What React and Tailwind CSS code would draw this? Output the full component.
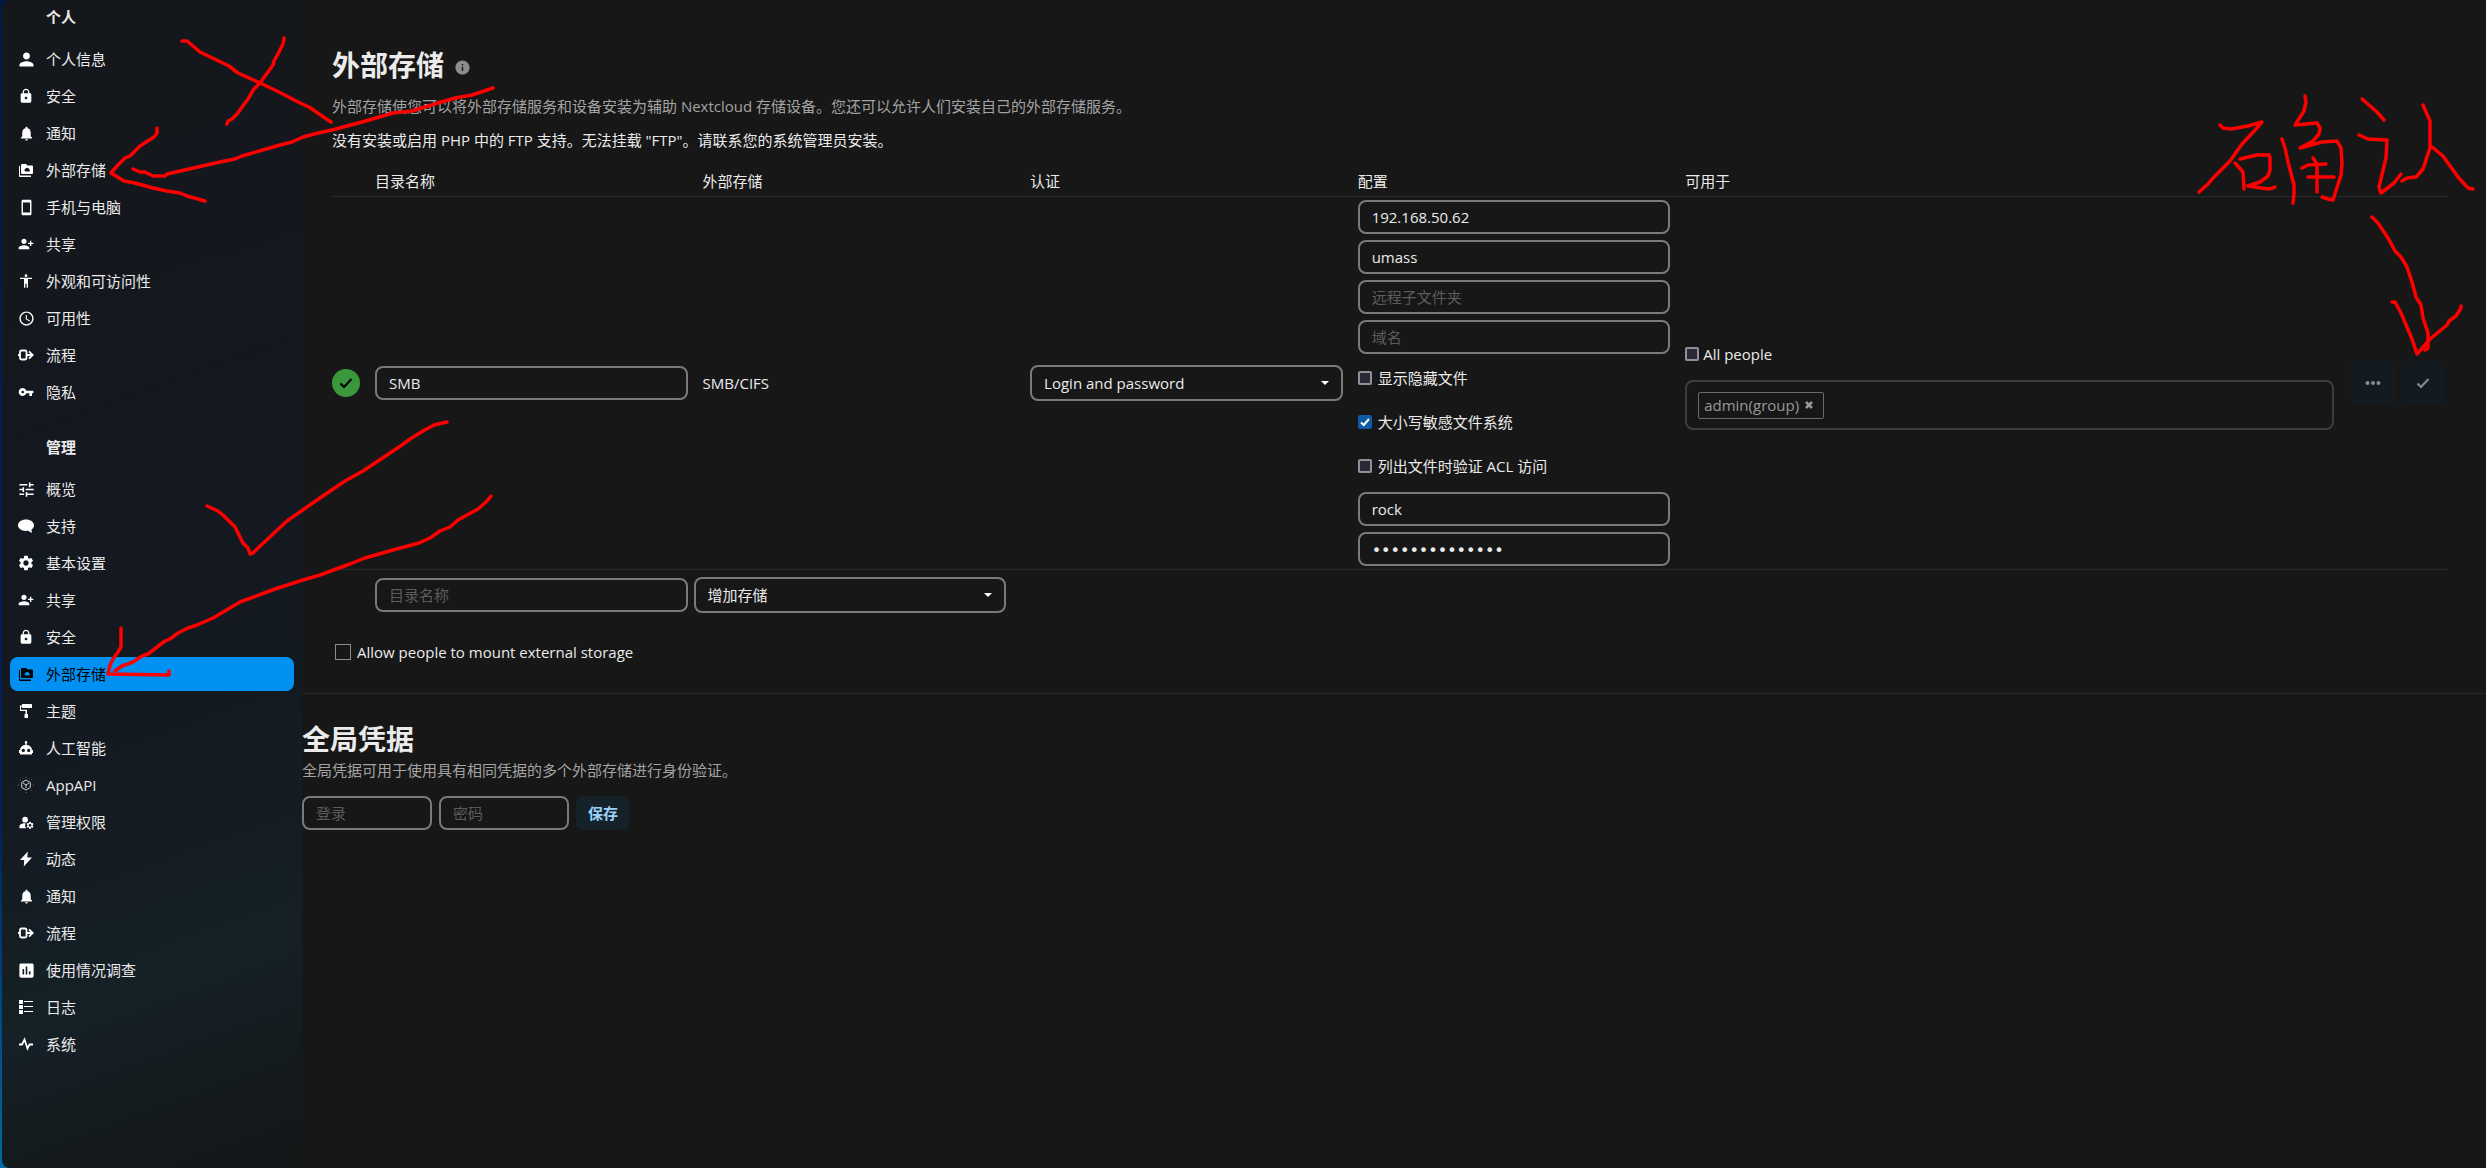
import { useState } from 'react'
import clsx from 'clsx'
import {
  MdAccessTime,
  MdAccessibility,
  MdAssessment,
  MdInfo,
  MdLock,
  MdManageAccounts,
  MdNotifications,
  MdPerson,
  MdPersonAddAlt1,
  MdSettings,
  MdSmartphone,
  MdTune,
  MdVpnKey,
} from 'react-icons/md'

function ExternalIcon() {
  return (
    <svg viewBox="0 0 16 16" className="size-4" fill="currentColor">
      <path d="M1 4h1v9.5h11V15H2a1 1 0 0 1-1-1z" />
      <path fillRule="evenodd" d="M4 2h4l1.5 1.5H14a1 1 0 0 1 1 1V11a1 1 0 0 1-1 1H4a1 1 0 0 1-1-1V3a1 1 0 0 1 1-1zm3.500 7.500h3.500a1.200 1.200 0 0 0 .1-2.300 1.900 1.900 0 0 0-3.600-.4 1.400 1.400 0 0 0 0 2.700z" />
    </svg>
  )
}

function FlowIcon() {
  return (
    <svg viewBox="0 0 16 16" className="size-4" fill="none" stroke="currentColor" strokeWidth="1.8">
      <path d="M0 8h2M8.500 8h6.500M11 4.300 14.700 8 11 11.700" />
      <rect x="2" y="3.500" width="6.500" height="9" rx="1.500" />
    </svg>
  )
}

function ChatIcon() {
  return (
    <svg viewBox="0 0 16 16" className="size-4" fill="currentColor">
      <path d="M8 1.500c4.400 0 8 2.400 8 5.700 0 1.900-1 3.400-2.600 4.500L14 15l-4-2.200c-.6.100-1.300.1-2 .1-4.400 0-8-2.400-8-5.700s3.600-5.700 8-5.700z" />
    </svg>
  )
}

function RollerIcon() {
  return (
    <svg viewBox="0 0 16 16" className="size-4" fill="currentColor">
      <path d="M4.500 1h9a.5.500 0 0 1 .5.500v3a.5.500 0 0 1-.5.500h-9a.5.500 0 0 1-.5-.5V3.700H3v3h6V11h.5a.5.500 0 0 1 .5.500V14.500a.5.500 0 0 1-.5.500h-2.500a.5.500 0 0 1-.5-.5v-3a.5.500 0 0 1 .5-.5h.5V8H2V2.500h2v-1a.5.500 0 0 1 .5-.5z" />
    </svg>
  )
}

function RobotIcon() {
  return (
    <svg viewBox="0 0 16 16" className="size-4" fill="currentColor">
      <path fillRule="evenodd" d="M8 1a1.300 1.300 0 0 1 .7 2.400V5A5.300 5.300 0 0 1 14 10h1v3h-1v1.500H2V13H1v-3h1a5.300 5.300 0 0 1 5.300-5V3.400A1.300 1.300 0 0 1 8 1zM5.300 8.700a1.700 1.700 0 1 0 0 3.400 1.700 1.700 0 0 0 0-3.400zm5.400 0a1.700 1.700 0 1 0 0 3.400 1.700 1.700 0 0 0 0-3.400z" />
    </svg>
  )
}

function CubeIcon() {
  return (
    <svg viewBox="0 0 16 16" className="size-4 opacity-80" fill="none" stroke="currentColor">
      <path d="M8 3 12.300 5.500v5L8 13l-4.300-2.500v-5zM5 6l3 2 3-2M8 8v3" />
      <path d="M8 0v1M8 15v1M0 8h1M15 8h1M2 2.500l.7.500M13.300 13l.7.500M14 2.500l-.7.500M2.700 13l-.7.500" strokeOpacity=".5" />
    </svg>
  )
}

function BoltIcon() {
  return (
    <svg viewBox="0 0 16 16" className="size-4" fill="currentColor">
      <path d="M9.800.5 2 9h4.200L5.800 15.500 14 6.500H9.300z" />
    </svg>
  )
}

function LogIcon() {
  return (
    <svg viewBox="0 0 16 16" className="size-4" fill="currentColor">
      <path d="M1 1h4v4H1zM1 6h4v4H1zM1 11h4v4H1zM6 2h9v1H6zM6 7h9v1H6zM6 12h9v1H6z" />
    </svg>
  )
}

function PulseIcon() {
  return (
    <svg viewBox="0 0 16 16" className="size-4" fill="none" stroke="currentColor" strokeWidth="1.800">
      <path d="M1 8.500h3L6.500 3.500l3 9 2-4H15" />
    </svg>
  )
}

const PERSONAL = [
  { label: '个人信息', icon: <MdPerson className="size-[21px]" /> },
  { label: '安全', icon: <MdLock className="size-4" /> },
  { label: '通知', icon: <MdNotifications className="size-[17px]" /> },
  { label: '外部存储', icon: <ExternalIcon /> },
  { label: '手机与电脑', icon: <MdSmartphone className="size-[17px]" /> },
  { label: '共享', icon: <MdPersonAddAlt1 className="size-4" /> },
  { label: '外观和可访问性', icon: <MdAccessibility className="size-4" /> },
  { label: '可用性', icon: <MdAccessTime className="size-[17px]" /> },
  { label: '流程', icon: <FlowIcon /> },
  { label: '隐私', icon: <MdVpnKey className="size-4" /> },
]

const ADMIN = [
  { label: '概览', icon: <MdTune className="size-[19px]" /> },
  { label: '支持', icon: <ChatIcon /> },
  { label: '基本设置', icon: <MdSettings className="size-[18px]" /> },
  { label: '共享', icon: <MdPersonAddAlt1 className="size-4" /> },
  { label: '安全', icon: <MdLock className="size-4" /> },
  { label: '外部存储', icon: <ExternalIcon />, active: true },
  { label: '主题', icon: <RollerIcon /> },
  { label: '人工智能', icon: <RobotIcon /> },
  { label: 'AppAPI', icon: <CubeIcon /> },
  { label: '管理权限', icon: <MdManageAccounts className="size-[17px]" /> },
  { label: '动态', icon: <BoltIcon /> },
  { label: '通知', icon: <MdNotifications className="size-[17px]" /> },
  { label: '流程', icon: <FlowIcon /> },
  { label: '使用情况调查', icon: <MdAssessment className="size-[19px]" /> },
  { label: '日志', icon: <LogIcon /> },
  { label: '系统', icon: <PulseIcon /> },
]

const INPUT =
  'h-[34px] w-full rounded-lg border-2 border-[#7a7a7a] bg-[#171717] px-3 text-[15px] text-[#ebebeb] placeholder:text-[#5c5c5c] outline-none'

// Pen strokes drawn over the page, one entry per stroke
const STROKES = [
  '182,41 187,41 200,52 229,66 238,73 260,83 277,91 300,103 309,107 325,118 331,122',
  '284,38 283,44 279,52 274,61 273,65 260,83 254,89 248,99 237,114 232,119 228,121 227,124',
  '493,88 472,95 455,98 438,103 412,111 393,113 362,122 332,130 318,133 303,137 292,142 280,145 242,156 235,159 220,162 167,174 165,176 153,176 145,172 140,172 133,169',
  '157,128 157,133 154,137 140,146 130,156 125,158 117,166 111,173 124,181 135,183 153,188 167,191 180,193 187,196 205,201',
  '207,506 218,511 224,516 235,527 243,543 248,548 250,554 253,553 257,549 273,534 287,521 317,500 345,481 363,471 387,455 402,445 410,439 423,431 434,425 447,422',
  '491,496 487,501 478,509 458,520 450,527 440,531 430,538 419,543 393,550 365,558 350,564 320,575 303,580 275,589 240,602 213,618 197,625 188,628 178,633 170,639 165,641 161,644 148,654 142,656 133,662 122,666 115,671',
  '121,628 121,647 118,652 113,659 110,665 108,674 169,675 169,671',
  '2220,125 2223,128 2231,129 2248,126 2262,122 2256,129 2242,144 2230,161 2213,178 2208,184 2199,192',
  '2240,159 2257,155 2269,155 2270,158 2270,170 2268,176 2260,182 2248,186 2268,189 2273,188 2275,187',
  '2235,163 2243,172 2244,189',
  '2282,139 2285,148 2288,162 2294,185 2294,193 2293,203',
  '2305,96 2306,102 2304,111 2295,125 2317,123 2320,128 2319,134 2313,141 2300,148 2322,142 2337,141 2341,148 2342,163 2341,175 2333,200 2328,199 2322,197',
  '2302,168 2308,165 2326,164',
  '2308,177 2334,177',
  '2313,158 2317,164 2317,192',
  '2362,99 2377,112 2384,120',
  '2359,135 2368,139 2387,140 2386,158 2379,187 2381,193 2394,183 2401,174',
  '2423,105 2430,121 2430,148 2423,169 2416,177 2407,178 2402,181',
  '2432,147 2443,156 2458,177 2468,188 2473,189',
  '2372,217 2378,223 2388,238 2395,251 2401,257 2407,267 2412,282 2416,297 2421,305 2423,318 2428,333 2428,348 2425,350',
  '2392,302 2395,302 2401,313 2412,339 2417,354 2430,339 2447,325 2449,321 2456,316 2461,308 2461,306',
]

function NavGroup({ title, items }) {
  return (
    <div className="mb-[21px]">
      <h3 className="mb-2 flex h-[34px] items-center pl-9 text-[15px] font-bold">{title}</h3>
      <ul className="space-y-[3px]">
        {items.map((item) => (
          <li key={item.label}>
            <a
              href="#"
              className={clsx('flex h-[34px] items-center rounded-lg', item.active && 'bg-[#0091f2] text-black')}
            >
              <span className={clsx('flex w-8 justify-center', !item.active && 'text-white')}>{item.icon}</span>
              <span className="pl-1">{item.label}</span>
            </a>
          </li>
        ))}
      </ul>
    </div>
  )
}

function Checkbox({ label, defaultChecked = false, className }) {
  const [checked, setChecked] = useState(defaultChecked)
  return (
    <label className={clsx('flex h-11 items-center', className)}>
      <span className="relative flex">
        <input
          type="checkbox"
          checked={checked}
          onChange={(e) => setChecked(e.target.checked)}
          className="size-3.5 appearance-none rounded-xs border-2 border-[#8f8f9d] bg-[#2b2a33] checked:border-[#0f5ba5] checked:bg-[#0f5ba5]"
        />
        {checked && (
          <svg viewBox="0 0 14 14" className="pointer-events-none absolute inset-0 size-3.5" fill="none" stroke="white" strokeWidth="2">
            <path d="M3 7.500 5.800 10 11 4" />
          </svg>
        )}
      </span>
      {label}
    </label>
  )
}

function Select({ label, value }) {
  return (
    <div className="relative w-full">
      <select
        aria-label={label}
        className="h-9 w-full appearance-none rounded-lg border-2 border-[#7a7a7a] bg-[#171717] px-3 text-[15px] text-[#ebebeb] outline-none"
      >
        <option>{value}</option>
      </select>
      <svg viewBox="0 0 8 4" className="pointer-events-none absolute top-4 right-3.5 h-1 w-2" fill="white">
        <path d="M0 0h8L4 4z" />
      </svg>
    </div>
  )
}

export default function App() {
  return (
    <div className="relative flex min-h-screen bg-[#171717] font-['Open_Sans','Noto_Sans_CJK_SC',sans-serif] text-[15px] leading-6 text-[#ebebeb]">
      {/* Sidebar */}
      <div className="flex shrink-0 bg-linear-to-b from-[#001a45] via-[#00205a] via-70% to-[#006ba3] pl-0.5">
        <nav className="w-[300px] overflow-hidden rounded-l-lg bg-[linear-gradient(160deg,#14181b_0%,#14171f_35%,#141a21_62%,#152027_82%,#141a1c_92%,#131617_100%)] px-2">
          <NavGroup title="个人" items={PERSONAL} />
          <NavGroup title="管理" items={ADMIN} />
        </nav>
      </div>

      <main className="min-w-0 flex-1">
        {/* External storage */}
        <section className="border-b border-[#292929] pt-[45px] pr-[38px] pb-[29px] pl-[30px]">
          <h2 className="flex h-10 items-center text-[28px] font-bold">
            外部存储
            <a href="#" aria-label="info" className="mt-1 ml-2.5 text-[#8c8c8c]">
              <MdInfo className="size-[17px]" />
            </a>
          </h2>
          <p className="mt-[9px] text-[#a3a3a3]">
            外部存储使您可以将外部存储服务和设备安装为辅助 Nextcloud 存储设备。您还可以允许人们安装自己的外部存储服务。
          </p>
          <p className="mt-2.5">没有安装或启用 PHP 中的 FTP 支持。无法挂载 "FTP"。请联系您的系统管理员安装。</p>

          <table className="mt-[15px] w-full table-fixed border-separate border-spacing-0 text-left">
            <colgroup>
              <col className="w-[34px]" />
              <col className="w-[15.48%]" />
              <col className="w-[15.48%]" />
              <col className="w-[15.48%]" />
              <col className="w-[15.48%]" />
              <col />
              <col className="w-[106px]" />
            </colgroup>
            <thead>
              <tr className="h-[30px] *:border-b *:border-[#292929] *:pb-0.5 *:pl-[9px] *:font-normal">
                <th></th>
                <th>目录名称</th>
                <th>外部存储</th>
                <th>认证</th>
                <th>配置</th>
                <th>可用于</th>
                <th></th>
              </tr>
            </thead>
            <tbody>
              <tr className="*:border-b *:border-[#292929]">
                <td>
                  <span className="flex size-7 items-center justify-center rounded-full bg-[#3b973b]">
                    <svg viewBox="0 0 16 16" className="size-4" fill="none" stroke="black" strokeWidth="2">
                      <path d="M2.500 8.500 6 12l7.500-8" />
                    </svg>
                  </span>
                </td>
                <td className="pr-1.5 pl-[9px]">
                  <input aria-label="目录名称" defaultValue="SMB" className={INPUT} />
                </td>
                <td className="pr-1.5 pl-[9px]">SMB/CIFS</td>
                <td className="pr-1.5 pl-[9px]">
                  <Select label="认证" value="Login and password" />
                </td>
                <td className="pr-1.5 pl-[9px]">
                  <div className="flex flex-col gap-1.5 pt-[3px] pb-0.5">
                    <input aria-label="主机" defaultValue="192.168.50.62" className={INPUT} />
                    <input aria-label="共享" defaultValue="umass" className={INPUT} />
                    <input placeholder="远程子文件夹" className={INPUT} />
                    <input placeholder="域名" className={INPUT} />
                  </div>
                  <Checkbox label="显示隐藏文件" className="gap-1.5" />
                  <Checkbox label="大小写敏感文件系统" className="gap-1.5" defaultChecked />
                  <Checkbox label="列出文件时验证 ACL 访问" className="gap-1.5" />
                  <div className="flex flex-col gap-1.5 pt-1 pb-[3px]">
                    <input aria-label="登录" defaultValue="rock" className={INPUT} />
                    <input
                      type="password"
                      aria-label="密码"
                      defaultValue="12345678901234"
                      className="h-[34px] w-full rounded-lg border-2 border-[#7a7a7a] bg-[#171717] px-3 pt-0.5 font-['DejaVu_Sans',sans-serif] text-base text-[#ebebeb] outline-none"
                    />
                  </div>
                </td>
                <td className="pr-2 pl-[9px]">
                  <Checkbox label="All people" className="gap-1" />
                  <div className="my-1 flex h-[50px] items-center rounded-lg border-2 border-[#3d3d3d] px-[11px]">
                    <span className="flex h-[27px] items-center gap-1.5 rounded-xs border border-[#6a6a6a] pr-2.5 pl-[5px] text-[#999999]">
                      admin(group)
                      <button type="button" aria-label="移除" className="flex">
                        <svg viewBox="0 0 8 8" className="size-2" stroke="currentColor" strokeWidth="2.500">
                          <path d="m1 1 6 6M7 1 1 7" />
                        </svg>
                      </button>
                    </span>
                  </div>
                </td>
                <td className="pl-[9px]">
                  <div className="flex gap-1.5">
                    <button type="button" aria-label="更多" className="flex size-11 items-center justify-center rounded-lg bg-[#141b20] text-[#8c8c8c]">
                      <svg viewBox="0 0 16 16" className="size-4" fill="currentColor">
                        <circle cx="2.500" cy="8" r="2" />
                        <circle cx="8" cy="8" r="2" />
                        <circle cx="13.500" cy="8" r="2" />
                      </svg>
                    </button>
                    <button type="button" aria-label="保存" className="flex size-11 items-center justify-center rounded-lg bg-[#141b20] text-[#8c8c8c]">
                      <svg viewBox="0 0 16 16" className="size-4" fill="none" stroke="currentColor" strokeWidth="2">
                        <path d="M2.500 8.500 6 12l7.500-8" />
                      </svg>
                    </button>
                  </div>
                </td>
              </tr>
              <tr className="h-[50px]">
                <td></td>
                <td className="pr-1.5 pl-[9px]">
                  <input placeholder="目录名称" className={INPUT} />
                </td>
                <td className="pr-[15px]">
                  <Select label="外部存储" value="增加存储" />
                </td>
                <td colSpan={4}></td>
              </tr>
            </tbody>
          </table>

          <label className="mt-5 flex h-6 items-center gap-1.5 pl-[3px]">
            <input type="checkbox" className="size-4 appearance-none border border-[#8c8c8c] checked:bg-[#0091f2]" />
            Allow people to mount external storage
          </label>
        </section>

        {/* Global credentials */}
        <section className="pt-[25px]">
          <h2 className="flex h-[39px] items-center text-[28px] font-bold">全局凭据</h2>
          <p className="text-[#a3a3a3]">全局凭据可用于使用具有相同凭据的多个外部存储进行身份验证。</p>
          <form className="mt-3.5 flex gap-[7px]" onSubmit={(e) => e.preventDefault()}>
            <div className="w-[130px]">
              <input placeholder="登录" className={INPUT} />
            </div>
            <div className="w-[130px]">
              <input type="password" placeholder="密码" className={INPUT} />
            </div>
            <button type="submit" className="h-[34px] rounded-lg bg-[#15222a] px-3 font-bold text-[#99d3fa]">
              保存
            </button>
          </form>
        </section>
      </main>

      <svg
        viewBox="0 0 2486 1168"
        className="pointer-events-none absolute top-0 left-0 h-[1168px] w-[2486px] max-w-none"
        fill="none"
        stroke="#ff0000"
        strokeWidth="3.5"
        strokeLinecap="round"
        strokeLinejoin="round"
      >
        {STROKES.map((points) => (
          <polyline key={points} points={points} />
        ))}
      </svg>
    </div>
  )
}
